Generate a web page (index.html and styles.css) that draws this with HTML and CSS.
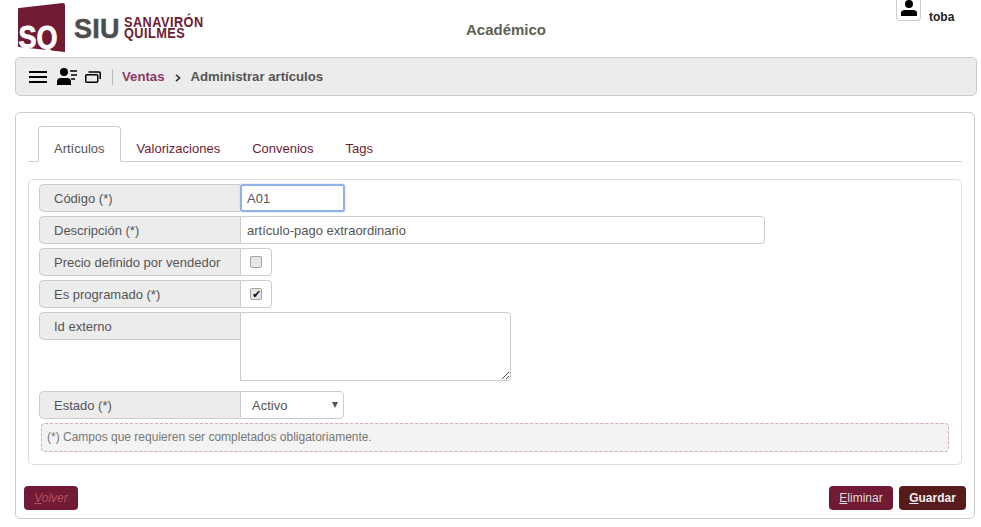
FILE: index.html
```html
<!DOCTYPE html>
<html lang="es">
<head>
  <meta charset="UTF-8">
  <title>Administrar artículos</title>
  <link rel="stylesheet" href="styles.css">
</head>
<body>

<!-- Header -->
<div class="header">
  <div class="logo">
    <svg class="logo-mark" width="48" height="54" viewBox="0 0 48 54">
      <path d="M1 5 L45 0 Q47 0 47 2 L47 49 L1 44 Q0 44 0 43 L0 6 Q0 5 1 5 Z" fill="#701a33"/>
      <text x="0.5" y="45" textLength="39" lengthAdjust="spacingAndGlyphs" class="logo-sq">SQ</text>
    </svg>
    <span class="logo-siu">SIU</span>
    <span class="logo-name">SANAVIRÓN<br>QUILMES</span>
  </div>
  <div class="app-title">Académico</div>
  <div class="user">
    <span class="user-btn">
      <svg width="16" height="16" viewBox="0 0 16 16">
        <circle cx="8" cy="4" r="4" fill="#000"/>
        <path d="M0 16 V13 Q0 10 4 10 H12 Q16 10 16 13 V16 Z" fill="#000"/>
      </svg>
    </span>
    <span class="user-name">toba</span>
  </div>
</div>

<!-- Breadcrumb bar -->
<div class="bar">
  <svg class="icon-menu" width="18" height="12" viewBox="0 0 18 12">
    <path d="M0 1 H18 M0 6 H18 M0 11 H18" stroke="#000" stroke-width="2"/>
  </svg>
  <svg class="icon-people" width="20" height="17" viewBox="0 0 20 17">
    <circle cx="7" cy="4" r="4" fill="#000"/>
    <path d="M0 17 V14 Q0 10 4 10 H10 Q14 10 14 14 V17 Z" fill="#000"/>
    <path d="M13 3 H20 M14 7 H20 M14 11 H18" stroke="#000" stroke-width="1.5"/>
  </svg>
  <svg class="icon-windows" width="16" height="12" viewBox="0 0 16 12">
    <rect x="0.75" y="3.75" width="12" height="7.5" rx="1" fill="none" stroke="#000" stroke-width="1.5"/>
    <path d="M3.5 1 H14 Q15.25 1 15.25 2.2 V8" fill="none" stroke="#000" stroke-width="1.5"/>
  </svg>
  <span class="bar-sep"></span>
  <a class="crumb-link">Ventas</a>
  <svg class="crumb-arrow" width="6" height="8" viewBox="0 0 6 8">
    <path d="M1 0.8 L4.6 4 L1 7.2" fill="none" stroke="#333" stroke-width="1.6"/>
  </svg>
  <span class="crumb-current">Administrar artículos</span>
</div>

<!-- Main panel -->
<div class="panel">
  <div class="tabs">
    <a class="tab active">Artículos</a>
    <a class="tab">Valorizaciones</a>
    <a class="tab">Convenios</a>
    <a class="tab">Tags</a>
  </div>

  <div class="form-box">
    <div class="row">
      <label class="row-label">Código (*)</label>
      <input class="field field-code" type="text" value="A01">
    </div>
    <div class="row">
      <label class="row-label">Descripción (*)</label>
      <input class="field field-desc" type="text" value="artículo-pago extraordinario">
    </div>
    <div class="row">
      <label class="row-label">Precio definido por vendedor</label>
      <span class="check-cell"><span class="check"></span></span>
    </div>
    <div class="row">
      <label class="row-label">Es programado (*)</label>
      <span class="check-cell"><span class="check">&#10004;</span></span>
    </div>
    <div class="row row-area">
      <label class="row-label">Id externo</label>
      <span class="area">
        <svg class="area-grip" width="7" height="7" viewBox="0 0 7 7">
          <path d="M0 7 L7 0 M4 7 L7 4" stroke="#555" stroke-width="1"/>
        </svg>
      </span>
    </div>
    <div class="row">
      <label class="row-label">Estado (*)</label>
      <span class="select">Activo<span class="select-arrow"></span></span>
    </div>
    <div class="note">(*) Campos que requieren ser completados obligatoriamente.</div>
  </div>

  <div class="actions">
    <button class="btn btn-back"><u>V</u>olver</button>
    <span class="actions-right">
      <button class="btn btn-delete"><u>E</u>liminar</button>
      <button class="btn btn-save"><u>G</u>uardar</button>
    </span>
  </div>
</div>

</body>
</html>
```

FILE: styles.css
```css
body {
  margin: 0;
  background-color: #fff;
  font-family: "Liberation Sans", Arial, sans-serif;
  font-size: 13px;
  color: #555;
}

/* header */
.header {
  display: flex;
  height: 57px;
}
.logo {
  display: flex;
  width: 187px;
  height: 57px;
  margin-left: 18px;
  padding-top: 3px;
  box-sizing: border-box;
  align-items: flex-start;
}
.logo-mark {
  flex-shrink: 0;
}
.logo-sq {
  font-family: "Liberation Sans", Arial, sans-serif;
  font-size: 32px;
  font-weight: bold;
  fill: #fff;
  stroke: #fff;
  stroke-width: 0.8px;
}
.logo-siu {
  margin: 10px 0 0 8px;
  font-size: 27px;
  line-height: 32px;
  font-weight: bold;
  letter-spacing: 0.3px;
  color: #4d4d4d;
  -webkit-text-stroke: 0.5px #4d4d4d;
}
.logo-name {
  margin: 14px 0 0 4px;
  font-size: 14px;
  line-height: 11px;
  font-weight: bold;
  letter-spacing: 0.5px;
  color: #701a33;
  white-space: nowrap;
  transform: scaleX(0.91);
  transform-origin: left;
}
.app-title {
  width: 566px;
  margin-left: 18px;
  padding-top: 21px;
  text-align: center;
  font-size: 15px;
  line-height: 18px;
  font-weight: bold;
  color: #5f5f55;
}
.user {
  display: flex;
  margin-left: 107px;
  align-items: flex-start;
}
.user-btn {
  display: flex;
  width: 25px;
  height: 21px;
  box-sizing: border-box;
  justify-content: center;
  border: 1px solid #ccc;
  border-top: 0;
  border-radius: 0 0 4px 4px;
}
.user-name {
  margin: 11px 0 0 8px;
  font-size: 12px;
  line-height: 13px;
  font-weight: bold;
  color: #222;
}

/* breadcrumb bar */
.bar {
  display: flex;
  width: 962px;
  height: 39px;
  margin-left: 15px;
  padding-left: 13px;
  box-sizing: border-box;
  align-items: center;
  background-color: #ececec;
  border: 1px solid #ccc;
  border-radius: 5px;
}
.icon-menu {
  margin-right: 10px;
}
.icon-people {
  margin-right: 8px;
}
.bar-sep {
  width: 1px;
  height: 16px;
  margin: 0 9px 0 11px;
  background-color: #bbb;
}
.crumb-link {
  font-size: 13.2px;
  font-weight: bold;
  color: #8b3a68;
}
.crumb-arrow {
  margin: 2px 10px 0 10px;
}
.crumb-current {
  font-size: 13.2px;
  font-weight: bold;
  color: #555;
}

/* panel */
.panel {
  width: 960px;
  height: 407px;
  margin: 16px 0 0 15px;
  padding: 13px 12px 0;
  box-sizing: border-box;
  background-color: #fff;
  border: 1px solid #ccc;
  border-radius: 5px;
}
.tabs {
  display: flex;
  height: 36px;
  box-sizing: border-box;
  padding-left: 10px;
  border-bottom: 1px solid #ccc;
}
.tab {
  height: 36px;
  padding: 0 15px;
  box-sizing: border-box;
  font-size: 13px;
  line-height: 44px;
  color: #701a33;
  border: 1px solid transparent;
  border-radius: 4px 4px 0 0;
}
.tab.active {
  color: #555;
  background-color: #fff;
  border-color: #ccc;
  border-bottom-color: #fff;
}

/* form */
.form-box {
  height: 286px;
  margin-top: 17px;
  padding: 4px 10px 0;
  box-sizing: border-box;
  border: 1px solid #ddd;
  border-radius: 5px;
}
.row {
  display: flex;
  height: 28px;
  margin-bottom: 4px;
  align-items: flex-start;
}
.row-label {
  width: 201px;
  height: 28px;
  padding-left: 14px;
  box-sizing: border-box;
  flex-shrink: 0;
  font-size: 13px;
  line-height: 27px;
  color: #555;
  background-color: #ececec;
  border: 1px solid #ccc;
  border-right: 0;
  border-radius: 5px 0 0 5px;
}
.field {
  height: 28px;
  padding: 0 6px;
  box-sizing: border-box;
  font-family: "Liberation Sans", Arial, sans-serif;
  font-size: 13px;
  color: #555;
  background-color: #fff;
  border: 1px solid #ccc;
  border-radius: 0 4px 4px 0;
  outline: none;
}
.field-code {
  width: 105px;
  padding: 0 5px;
  border: 2px solid #8fb2e8;
  border-radius: 3px;
  box-shadow: 0 0 2px #b8cff0;
}
.field-desc {
  width: 525px;
}
.check-cell {
  display: flex;
  width: 32px;
  height: 28px;
  box-sizing: border-box;
  align-items: center;
  justify-content: center;
  border: 1px solid #ccc;
  border-radius: 0 4px 4px 0;
}
.check {
  width: 12px;
  height: 12px;
  box-sizing: border-box;
  font-size: 11px;
  line-height: 10px;
  text-align: center;
  color: #111;
  background-color: #e6e6e6;
  border: 1px solid #a5a5a5;
  border-radius: 2px;
}
.row-area {
  height: 69px;
  margin-bottom: 10px;
}
.area {
  position: relative;
  width: 271px;
  height: 69px;
  box-sizing: border-box;
  border: 1px solid #ccc;
  border-radius: 0 4px 4px 0;
}
.area-grip {
  position: absolute;
  right: 1px;
  bottom: 1px;
}
.select {
  position: relative;
  width: 104px;
  height: 28px;
  padding-left: 11px;
  box-sizing: border-box;
  font-size: 13px;
  line-height: 27px;
  color: #555;
  border: 1px solid #ccc;
  border-radius: 0 4px 4px 0;
}
.select-arrow {
  position: absolute;
  top: 10px;
  right: 5px;
  border-top: 6px solid #555;
  border-left: 3px solid transparent;
  border-right: 3px solid transparent;
}
.note {
  width: 908px;
  height: 29px;
  margin-left: 2px;
  padding-left: 5px;
  box-sizing: border-box;
  font-size: 12px;
  line-height: 27px;
  color: #777;
  background-color: #f3f3f3;
  border: 1px dashed #dba9b3;
  border-radius: 4px;
}

/* buttons */
.actions {
  display: flex;
  justify-content: space-between;
  margin: 21px -4px 0 -4px;
}
.actions-right {
  display: flex;
  gap: 6px;
}
.btn {
  height: 24px;
  padding: 0;
  font-family: "Liberation Sans", Arial, sans-serif;
  font-size: 12px;
  color: #ddd;
  border: none;
  border-radius: 4px;
  cursor: pointer;
}
.btn-back {
  width: 54px;
  font-style: italic;
  color: #b9505f;
  background-color: #701a33;
}
.btn-delete {
  width: 64px;
  background-color: #701a33;
}
.btn-save {
  width: 67px;
  font-weight: bold;
  color: #eee;
  background-color: #561c1c;
}
```
